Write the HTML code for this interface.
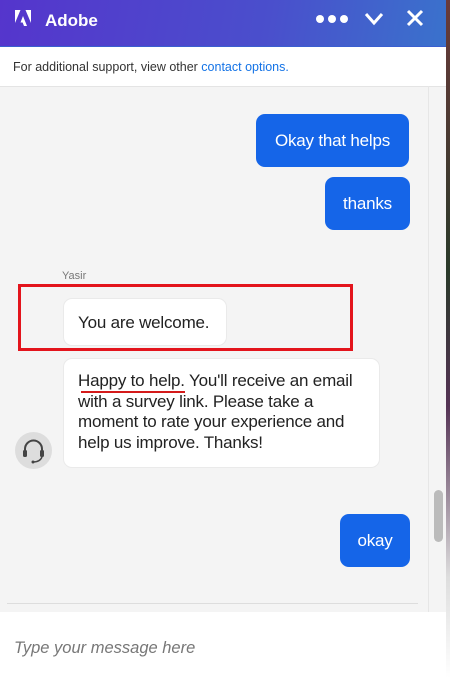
<!DOCTYPE html>
<html><head><style>
*{margin:0;padding:0;box-sizing:border-box}
body{width:450px;height:678px;overflow:hidden;font-family:"Liberation Sans",sans-serif;background:#f4f4f4;position:relative}
.hdr{position:absolute;left:0;top:0;width:446px;height:46px;background:linear-gradient(100deg,#5535cc,#4a4fcc 60%,#3a72cc);color:#fff}
.sub{position:absolute;left:0;top:46px;width:446px;height:41px;background:#fff;border-top:1px solid #3a5fd0;border-bottom:1px solid #e4e4e4;font-size:12.5px;color:#333;padding:13px 0 0 13px}
.sub span{color:#1473e6}
.b{position:absolute;border-radius:9px;font-size:17px;letter-spacing:-0.2px;white-space:nowrap}
.u{background:#1565e8;color:#fff;text-align:center}
.w{background:#fff;color:#222;border:1px solid #eaeaea}
.strip{position:absolute;left:446px;top:0;width:4px;height:678px;background:linear-gradient(#6a3a3a,#2a3a2a 40%,#553355 60%,#ddd 85%,#fff)}
</style></head><body>
<div class="hdr">
<svg style="position:absolute;left:15px;top:10px" width="16" height="20" viewBox="0 0 16 20"><path d="M0 0H5.5L0 13Z M10.5 0H16V13Z M8 6L12 16H9L7.6 12.5H5.5Z" fill="#fff"/></svg>
<div style="position:absolute;left:45px;top:11px;font-size:17px;font-weight:bold">Adobe</div>
<div style="position:absolute;left:316px;top:15px;display:flex;gap:4px"><i style="width:8px;height:8px;border-radius:50%;background:#fff"></i><i style="width:8px;height:8px;border-radius:50%;background:#fff"></i><i style="width:8px;height:8px;border-radius:50%;background:#fff"></i></div>
<svg style="position:absolute;left:364px;top:12px" width="20" height="14" viewBox="0 0 20 14"><path d="M2 2L10 11L18 2" stroke="#fff" stroke-width="3" fill="none"/></svg>
<svg style="position:absolute;left:406px;top:9px" width="18" height="18" viewBox="0 0 18 18"><path d="M2 2L16 16M16 2L2 16" stroke="#fff" stroke-width="3"/></svg>
</div>
<div class="sub">For additional support, view other <span>contact options.</span></div>
<div class="b u" style="left:256px;top:114px;width:153px;height:53px;line-height:53px">Okay that helps</div>
<div class="b u" style="left:325px;top:177px;width:85px;height:53px;line-height:53px">thanks</div>
<div style="position:absolute;left:62px;top:270px;font-size:11px;color:#777">Yasir</div>
<div class="b w" style="left:63px;top:298px;width:164px;height:48px;padding:14px 0 0 14px">You are welcome.</div>
<div style="position:absolute;left:18px;top:284px;width:335px;height:67px;border:3px solid #e3141c"></div>
<div class="b w" style="left:63px;top:358px;width:317px;height:110px;padding:12px 0 0 14px;line-height:20.5px">Happy to help. You'll receive an email<br>with a survey link. Please take a<br>moment to rate your experience and<br>help us improve. Thanks!</div>
<div style="position:absolute;left:81px;top:391px;width:104px;height:2px;background:#d41a1a"></div>
<div style="position:absolute;left:15px;top:432px;width:37px;height:37px;border-radius:50%;background:#ddd"></div>
<svg style="position:absolute;left:15px;top:432px" width="37" height="37" viewBox="0 0 37 37"><path d="M10 21V17A8.5 8.5 0 0 1 27 17V21" stroke="#444" stroke-width="2" fill="none"/><rect x="8" y="18" width="4" height="7" rx="1.5" fill="#444"/><rect x="25" y="18" width="4" height="7" rx="1.5" fill="#444"/><path d="M27 25Q25 30 18 30" stroke="#444" stroke-width="1.5" fill="none"/><circle cx="18" cy="30" r="1.5" fill="#444"/></svg>
<div class="b u" style="left:340px;top:514px;width:70px;height:53px;line-height:53px">okay</div>
<div style="position:absolute;left:7px;top:603px;width:411px;height:1px;background:#ddd"></div>
<div style="position:absolute;left:428px;top:86px;width:1px;height:526px;background:#e6e6e6"></div>
<div style="position:absolute;left:434px;top:490px;width:9px;height:52px;border-radius:5px;background:#bbb"></div>
<div style="position:absolute;left:0;top:612px;width:446px;height:66px;background:#fff"></div>
<div style="position:absolute;left:14px;top:639px;font-size:16.5px;font-style:italic;color:#777">Type your message here</div>
<div class="strip"></div>
</body></html>
